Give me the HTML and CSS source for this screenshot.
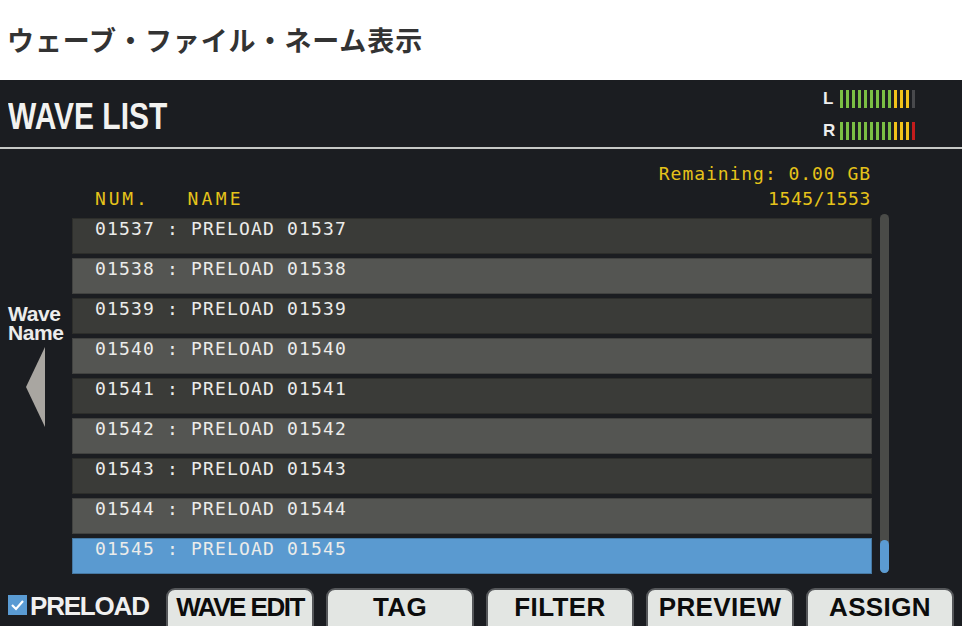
FILE: index.html
```html
<!DOCTYPE html>
<html lang="ja">
<head>
<meta charset="utf-8">
<title>WAVE LIST</title>
<link rel="stylesheet" href="styles.css">
</head>
<body>
<div class="page-title">ウェーブ・ファイル・ネーム表示</div>
<div class="panel">
  <header class="head">
    <h1 class="screen-title"><span>WAVE LIST</span></h1>
    <div class="meters">
      <div class="meter">
        <span class="ch">L</span>
        <div class="bars">
          <i class="g"></i><i class="g"></i><i class="g"></i><i class="g"></i><i class="g"></i><i class="g"></i><i class="g"></i><i class="g"></i><i class="g"></i><i class="y"></i><i class="y"></i><i class="y"></i><i class="off"></i>
        </div>
      </div>
      <div class="meter">
        <span class="ch">R</span>
        <div class="bars">
          <i class="g"></i><i class="g"></i><i class="g"></i><i class="g"></i><i class="g"></i><i class="g"></i><i class="g"></i><i class="g"></i><i class="g"></i><i class="y"></i><i class="y"></i><i class="y"></i><i class="r"></i>
        </div>
      </div>
    </div>
  </header>
  <div class="body">
    <aside class="side">
      <div class="side-label">Wave<br>Name</div>
      <svg class="side-arrow" width="20" height="80" viewBox="0 0 20 80"><polygon points="19,0 0,40 19,80" fill="#a9a6a1"/></svg>
    </aside>
    <main class="main">
      <div class="info">
        <div class="remaining">Remaining: 0.00 GB</div>
        <div class="cols">
          <span class="c-num">NUM.</span>
          <span class="c-name">NAME</span>
          <span class="count">1545/1553</span>
        </div>
      </div>
      <ul class="list">
        <li class="row dark">01537 : PRELOAD 01537</li>
        <li class="row light">01538 : PRELOAD 01538</li>
        <li class="row dark">01539 : PRELOAD 01539</li>
        <li class="row light">01540 : PRELOAD 01540</li>
        <li class="row dark">01541 : PRELOAD 01541</li>
        <li class="row light">01542 : PRELOAD 01542</li>
        <li class="row dark">01543 : PRELOAD 01543</li>
        <li class="row light">01544 : PRELOAD 01544</li>
        <li class="row sel">01545 : PRELOAD 01545</li>
      </ul>
    </main>
    <div class="scroll"><div class="thumb"></div></div>
  </div>
  <footer class="foot">
    <div class="preload">
      <span class="check"><svg width="19" height="20" viewBox="0 0 19 20"><polyline points="4,10 8,14 15,6" fill="none" stroke="#ffffff" stroke-width="2.2"/></svg></span>
      <span class="preload-text">PRELOAD</span>
    </div>
    <button class="btn btn-tight">WAVE EDIT</button>
    <button class="btn">TAG</button>
    <button class="btn">FILTER</button>
    <button class="btn">PREVIEW</button>
    <button class="btn">ASSIGN</button>
  </footer>
</div>
</body>
</html>
```
FILE: styles.css
```css
html, body {
  margin: 0;
  padding: 0;
  background: #ffffff;
  overflow: hidden;
}

body {
  width: 962px;
  height: 626px;
  font-family: "Liberation Sans", Arial, sans-serif;
}

.page-title {
  height: 80px;
  display: flex;
  align-items: center;
  padding: 0 0 2px 7px;
  font-family: "Noto Sans CJK JP", sans-serif;
  font-weight: 700;
  font-size: 27px;
  letter-spacing: 0.9px;
  color: #333333;
  box-sizing: border-box;
}

.panel {
  height: 546px;
  background: #1b1d21;
  overflow: hidden;
  display: flex;
  flex-direction: column;
}

/* header */
.head {
  height: 67px;
  flex: none;
  display: flex;
  justify-content: space-between;
  border-bottom: 2px solid #c6c8c6;
}

.screen-title {
  margin: 0;
  padding: 18px 0 0 8px;
  font-size: 37px;
  line-height: 37px;
  font-weight: 700;
  color: #f2f2f0;
}

.screen-title span {
  display: inline-block;
  transform: scaleX(0.81);
  transform-origin: left center;
  white-space: nowrap;
}

.meters {
  padding: 10px 47px 0 0;
  display: flex;
  flex-direction: column;
  gap: 14px;
}

.meter {
  display: flex;
  align-items: center;
  height: 18px;
}

.ch {
  width: 12px;
  margin-right: 5px;
  font-size: 17px;
  font-weight: 700;
  line-height: 18px;
  color: #eeeeee;
}

.bars {
  display: flex;
  gap: 3px;
  height: 18px;
}

.bars i {
  display: block;
  width: 3px;
  height: 18px;
}

.bars .g { background: #7bbf44; }
.bars .y { background: #f1c21a; }
.bars .off { background: #48494c; }
.bars .r { background: #c41c1c; }

/* body */
.body {
  height: 425px;
  flex: none;
  display: flex;
}

.side {
  width: 72px;
  flex: none;
  padding-top: 155px;
  box-sizing: border-box;
}

.side-label {
  padding-left: 8px;
  font-size: 21px;
  line-height: 19px;
  font-weight: 700;
  letter-spacing: -0.4px;
  color: #ececec;
}

.side-arrow {
  display: block;
  margin: 5px 0 0 26px;
}

.main {
  width: 800px;
  flex: none;
  font-family: "DejaVu Sans Mono", "Liberation Mono", monospace;
}

.info {
  padding: 16px 1px 0 0;
  height: 69px;
  box-sizing: border-box;
  color: #e6c31a;
  font-size: 18px;
  line-height: 18px;
}

.remaining {
  text-align: right;
  letter-spacing: 0.95px;
}

.cols {
  margin-top: 7px;
  display: flex;
  align-items: baseline;
}

.c-num {
  margin-left: 23px;
  letter-spacing: 2.8px;
}

.c-name {
  margin-left: 38px;
  letter-spacing: 3.2px;
}

.count {
  margin-left: auto;
  letter-spacing: 0.6px;
}

.list {
  list-style: none;
  margin: 0;
  padding: 0;
  display: flex;
  flex-direction: column;
  gap: 4px;
}

.row {
  height: 36px;
  box-sizing: border-box;
  padding: 2px 0 0 23px;
  font-size: 18px;
  line-height: 18px;
  letter-spacing: 1.16px;
  color: #ececea;
  white-space: pre;
  box-shadow: inset 0 0 0 1px rgba(0, 0, 0, 0.22);
}

.row.dark { background: #3a3b38; }
.row.light { background: #545552; }
.row.sel { background: #5a9ad0; }

.scroll {
  width: 9px;
  height: 359px;
  margin: 65px 0 0 8px;
  flex: none;
  border-radius: 5px;
  background: #4a4b48;
  display: flex;
  flex-direction: column;
  justify-content: flex-end;
}

.thumb {
  height: 33px;
  border-radius: 5px;
  background: #5b9bd2;
}

/* footer */
.foot {
  flex: none;
  display: flex;
  gap: 12px;
  padding: 14px 0 0 8px;
}

.preload {
  width: 146px;
  flex: none;
  display: flex;
  align-items: flex-start;
}

.check {
  display: block;
  width: 19px;
  height: 20px;
  margin-top: 7px;
  background: #5a9bd3;
}

.check svg {
  display: block;
}

.preload-text {
  margin: 5px 0 0 3px;
  font-size: 26px;
  line-height: 26px;
  font-weight: 700;
  letter-spacing: -1.2px;
  color: #f0f0f0;
}

.btn {
  width: 148px;
  height: 46px;
  flex: none;
  box-sizing: border-box;
  margin: 0;
  padding: 5px 0 0;
  border: 2px solid #55575a;
  border-radius: 9px;
  background: #e3e6e3;
  color: #0c0c0c;
  font-family: "Liberation Sans", Arial, sans-serif;
  font-size: 26px;
  line-height: 25px;
  font-weight: 700;
  letter-spacing: 0.4px;
  display: flex;
  justify-content: center;
  align-items: flex-start;
  white-space: nowrap;
}

.btn-tight {
  letter-spacing: -1.5px;
}
```
